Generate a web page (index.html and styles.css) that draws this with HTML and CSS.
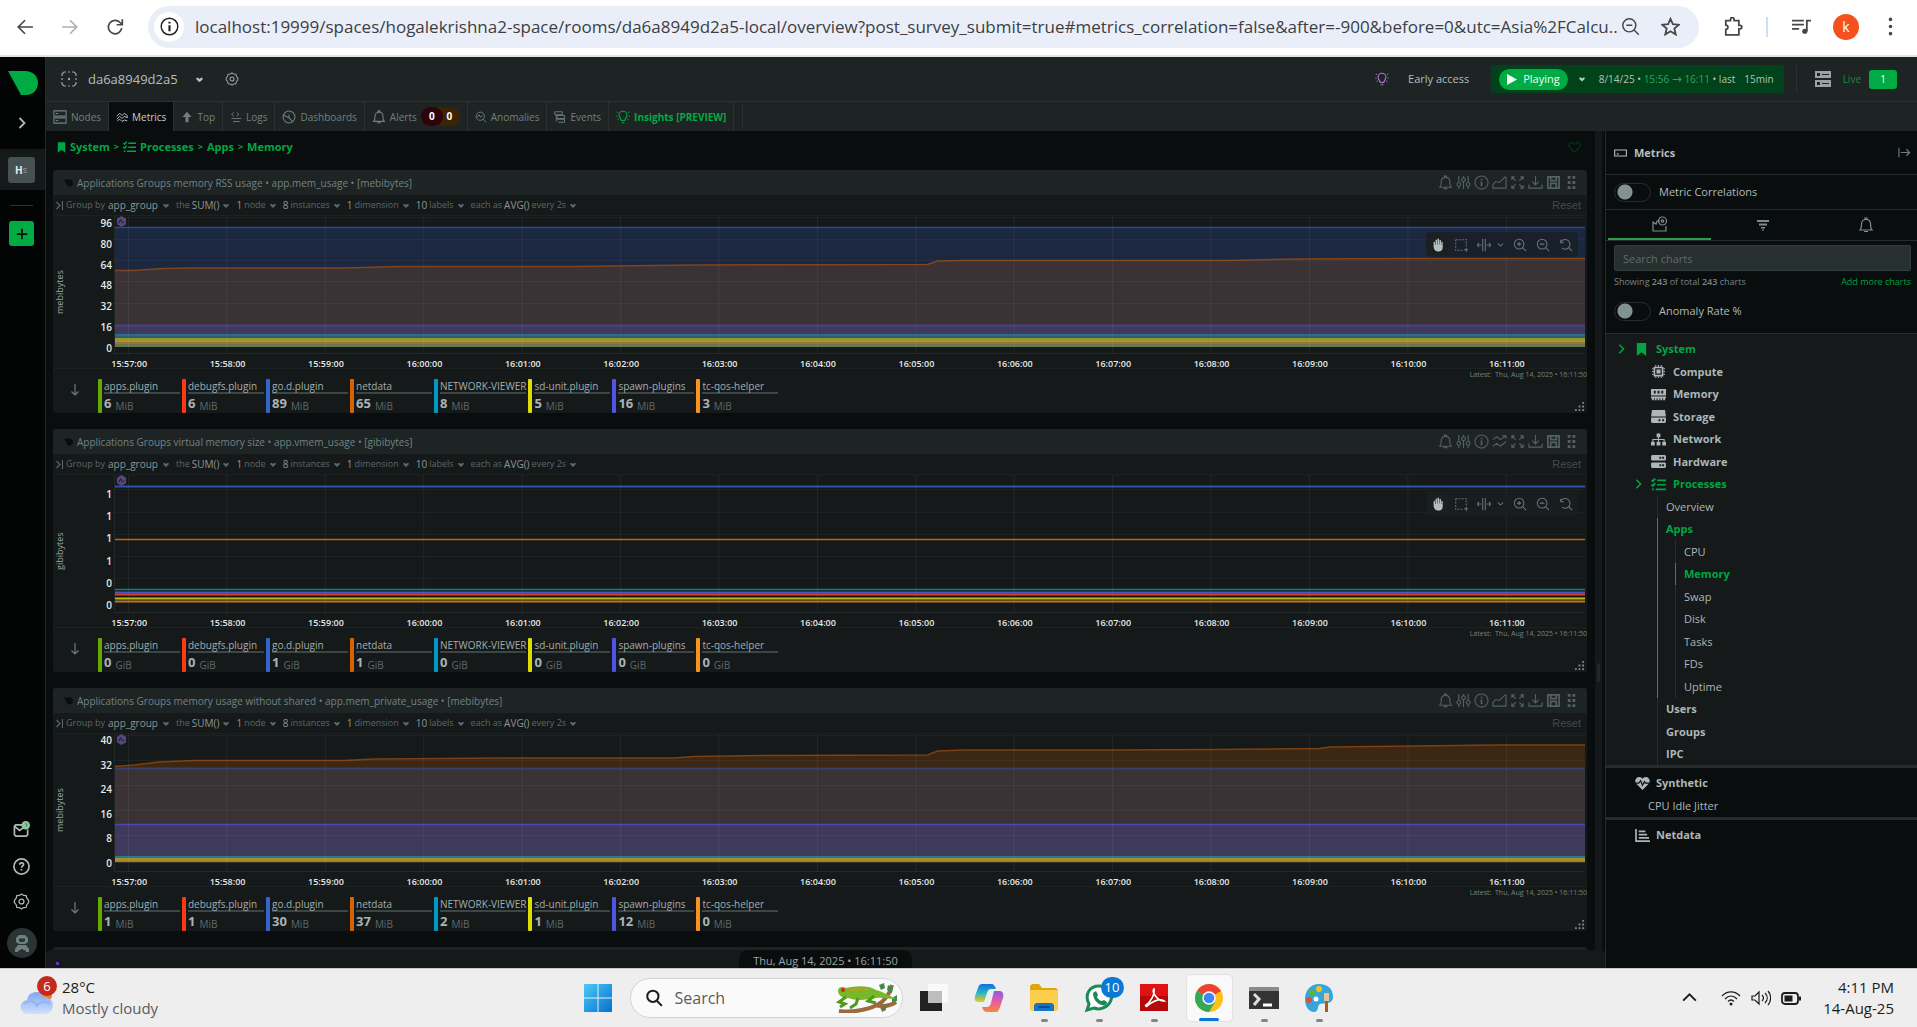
FILE: index.html
```html
<!DOCTYPE html>
<html lang="en">
<head>
<meta charset="utf-8">
<title>da6a8949d2a5 - Netdata</title>
<link rel="stylesheet" href="styles.css">
</head>
<body>
<svg class="defs" aria-hidden="true">
  <symbol id="logo" viewBox="0 0 30 24"><path d="M0 0h17c8 0 13 5 13 12s-5 12-12 12h-5z"/></symbol>
  <symbol id="chev" viewBox="0 0 8 8"><path d="M0.500 2h2L4 3.300 5.500 2h2v2L4 7.200 0.500 4z"/></symbol>
  <symbol id="thinchev" viewBox="0 0 8 8"><path d="M1 3l3 2.500L7 3" class="ln"/></symbol>
  <symbol id="right" viewBox="0 0 8 12"><path d="M1.500 1l5 5-5 5" class="ln th"/></symbol>
  <symbol id="bell" viewBox="0 0 16 16"><path d="M2 13c1-1 1.500-2 1.500-6 0-3 2-4.500 4.500-4.500S12.500 4 12.500 7c0 4 .5 5 1.500 6zM7 2.500V1h2v1.500M6 14.500h4" class="ln"/></symbol>
  <symbol id="gear" viewBox="0 0 16 16"><path d="M8 1l2 1.300 2.400.2.600 2.300L14.700 7v2L13 11l-.6 2.500-2.400.2L8 15l-2-1.300-2.400-.2L3 11 1.300 9V7L3 4.800l.6-2.300L6 2.300z" class="ln"/><circle cx="8" cy="8" r="2.300" class="ln"/></symbol>
  <symbol id="node" viewBox="0 0 16 16"><path d="M1 1h14v6H1zM1 9h14v6H1zM3 4h3M3 12h3" class="ln"/></symbol>
  <symbol id="waves" viewBox="0 0 16 16"><path d="M1 7l4-4 3 3 3-3 4 3v3l-4-2-3 3-3-3-4 4M2 13l3-2 3 3 3-2 4 1" class="ln"/></symbol>
  <symbol id="up" viewBox="0 0 16 16"><path d="M8 1l6 7h-4v7H6V8H2z"/></symbol>
  <symbol id="logs" viewBox="0 0 16 16"><path d="M5 2L2 4.500 5 7M9 2l3 2.500L9 7M2 10h13M4 14h9" class="ln"/></symbol>
  <symbol id="dash" viewBox="0 0 16 16"><circle cx="8" cy="8" r="6.800" class="ln"/><path d="M2 6l6 3V5M8 9l4 4" class="ln"/></symbol>
  <symbol id="anom" viewBox="0 0 16 16"><circle cx="7" cy="7" r="5.500" class="ln"/><path d="M3 8l2.500-3 2 3.500L10 6M11 11l4 4" class="ln"/></symbol>
  <symbol id="events" viewBox="0 0 16 16"><path d="M1 1h10v4H1zM4 6h10v4H4zM4 11h10v4H6M3 5v9" class="ln"/></symbol>
  <symbol id="bulb" viewBox="0 0 16 16"><path d="M6 12c0-2-2.500-3-2.500-6a4.500 4.500 0 0 1 9 0c0 3-2.500 4-2.500 6zM6.500 14.500h3M1 2l1 1M15 2l-1 1M0.500 7h1M14.500 7h1M2 11l1-1M14 11l-1-1" class="ln"/></symbol>
  <symbol id="bookmark" viewBox="0 0 12 14"><path d="M1 0h10v14l-5-4-5 4z"/></symbol>
  <symbol id="list" viewBox="0 0 16 14"><path d="M0.500 2l1.500 1.500L4.500.5M0.500 7L2 8.500 4.500 5.500M6.500 2.500H16M6.500 7.300H16M5 12.200h11M1 12.200h2" class="ln th"/></symbol>
  <symbol id="heart" viewBox="0 0 16 16"><path d="M8 14L2 8C0 5 2 2 4.500 2 6.500 2 8 4 8 4s1.500-2 3.500-2C14 2 16 5 14 8z" class="ln"/></symbol>
  <symbol id="sliders" viewBox="0 0 16 16"><path d="M3 1v7M3 12v3M8 1v2M8 7v8M13 1v7M13 12v3" class="ln"/><circle cx="3" cy="10" r="2" class="ln"/><circle cx="8" cy="5" r="2" class="ln"/><circle cx="13" cy="10" r="2" class="ln"/></symbol>
  <symbol id="info" viewBox="0 0 16 16"><circle cx="8" cy="8" r="7" class="ln"/><path d="M8 7v5M8 4v1.500" class="ln th"/></symbol>
  <symbol id="area" viewBox="0 0 16 16"><path d="M1 14V10l3-3 4 1 6-6 1 .5V14z" class="ln"/></symbol>
  <symbol id="lines" viewBox="0 0 16 16"><path d="M1 6l4-3 4 3 6-4M1 13l4-3 4 3 6-5M11 2h4v3" class="ln"/></symbol>
  <symbol id="full" viewBox="0 0 16 16"><path d="M2 5V2h3M2 2l4 4M11 2h3v3M14 2l-4 4M2 11v3h3M2 14l4-4M14 11v3h-3M14 14l-4-4" class="ln"/></symbol>
  <symbol id="down" viewBox="0 0 16 16"><path d="M8 1v9M4.500 7L8 10.500 11.500 7M1 10v4h14v-4" class="ln"/></symbol>
  <symbol id="save" viewBox="0 0 16 16"><path d="M2 2h12v12H2zM5 2v4h6V2M5 14V9h6v5" class="ln th"/></symbol>
  <symbol id="grip" viewBox="0 0 16 16"><path d="M4 1h3v3H4zM9 1h3v3H9zM4 6.500h3v3H4zM9 6.500h3v3H9zM4 12h3v3H4zM9 12h3v3H9z"/></symbol>
  <symbol id="arrow" viewBox="0 0 10 14"><path d="M5 1v11M1.500 8.500L5 12l3.500-3.500" class="ln"/></symbol>
  <symbol id="resize" viewBox="0 0 10 10"><path d="M8 0h2v2H8zM4 4h2v2H4zM8 4h2v2H8zM0 8h2v2H0zM4 8h2v2H4zM8 8h2v2H8z"/></symbol>
  <symbol id="hand" viewBox="0 0 16 16"><path d="M3 9.500V5c0-1 1.600-1 1.600 0v3h.6V2.600c0-1.200 1.700-1.200 1.700 0V7.500h.5V1.600c0-1.200 1.800-1.200 1.800 0v5.900h.5V2.800c0-1.200 1.700-1.200 1.700 0V8h.4V5c0-1 1.600-1 1.600 0v5.500c0 3.500-2 5-4.800 5S3 14 3 9.500z"/></symbol>
  <symbol id="select" viewBox="0 0 16 16"><path d="M2 2h12v8M2 2v12h8" class="ln dash"/><path d="M14 11v5M11.500 13.500h5" class="ln"/></symbol>
  <symbol id="pan" viewBox="0 0 16 16"><path d="M6.500 1v14M9.500 1v14M0 8h5M16 8h-5M2 5.500L.5 8 2 10.500M14 5.500L15.500 8 14 10.500" class="ln"/></symbol>
  <symbol id="zin" viewBox="0 0 16 16"><circle cx="7" cy="7" r="5.500" class="ln"/><path d="M11 11l4 4M4.500 7h5M7 4.500v5" class="ln"/></symbol>
  <symbol id="zout" viewBox="0 0 16 16"><circle cx="7" cy="7" r="5.500" class="ln"/><path d="M11 11l4 4M4.500 7h5" class="ln"/></symbol>
  <symbol id="zreset" viewBox="0 0 16 16"><path d="M2 2v3.500h3.500M2 5a5.500 5.500 0 1 1 1.500 6.500M11 11l4 4" class="ln"/></symbol>
  <symbol id="ai" viewBox="0 0 12 12"><path d="M6 0l5 3v6l-5 3-5-3V3z" fill="#54487c"/><path d="M3 8l2-4 2 3.500 2-1" fill="none" stroke="#1a1626"/></symbol>
  <symbol id="chip" viewBox="0 0 16 16"><path d="M3 3h10v10H3z" fill="none" stroke="currentColor" stroke-width="2"/><path d="M5.500 5.500h5v5h-5zM4 0h1.300v2H4zM7.300 0h1.300v2H7.300zM10.700 0H12v2h-1.300zM4 14h1.300v2H4zM7.300 14h1.300v2H7.300zM10.700 14H12v2h-1.300zM0 4h2v1.300H0zM0 7.300h2v1.300H0zM0 10.700h2V12H0zM14 4h2v1.300h-2zM14 7.300h2v1.300h-2zM14 10.700h2V12h-2z"/></symbol>
  <symbol id="ram" viewBox="0 0 16 12"><path fill-rule="evenodd" d="M0 0h16v7H0zM3 2v3h2V2zM7 2v3h2V2zM11 2v3h2V2zM0 8h16v2h-1v2h-2v-2h-1v2h-2v-2H9v2H7v-2H6v2H4v-2H3v2H1v-2H0z"/></symbol>
  <symbol id="disk" viewBox="0 0 16 14"><path d="M1 0h14l1 7H0z"/><path fill-rule="evenodd" d="M0 8h16v5l-1 1H1l-1-1zM8 10v2h2v-2zM12 10v2h2v-2z"/></symbol>
  <symbol id="net" viewBox="0 0 16 13"><path d="M6 0h4v4H6zM0 9h4v4H0zM6 9h4v4H6zM12 9h4v4h-4z"/><path d="M8 4v5M2 9V6.500h12V9" class="ln"/></symbol>
  <symbol id="server" viewBox="0 0 16 14"><path fill-rule="evenodd" d="M1 0h14l1 1v4l-1 1H1L0 5V1zM9 2v2h2V2zM12 2v2h2V2zM1 8h14l1 1v4l-1 1H1l-1-1V9zM9 10v2h2v-2zM12 10v2h2v-2z"/></symbol>
  <symbol id="pulse" viewBox="0 0 16 14"><path d="M8 14L1 7C-1 4 1 0 4.500 0 7 0 8 2 8 2s1-2 3.500-2C15 0 17 4 15 7z"/><path d="M0 6.500h4L6 4l2 5 2-4 1 1.500h5" fill="none" stroke="#0a0d0d" stroke-width="1.300"/></symbol>
  <symbol id="bars" viewBox="0 0 16 14"><path d="M1 0v13h15M4 2.500h7M4 6h9M4 9.500h11" class="ln th"/></symbol>
</svg>

<header class="browser">
  <button class="nav" aria-label="Back"><svg viewBox="0 0 16 16"><path d="M15 8H2M8 2L2 8l6 6" class="ln"/></svg></button>
  <button class="nav off" aria-label="Forward"><svg viewBox="0 0 16 16"><path d="M1 8h13M8 2l6 6-6 6" class="ln"/></svg></button>
  <button class="nav" aria-label="Reload"><svg viewBox="0 0 16 16"><path d="M14 9a6 6 0 1 1-1.500-5L14 5.500M14.500 1v5h-5" class="ln"/></svg></button>
  <div class="omnibox">
    <button class="site" aria-label="Site information"><svg viewBox="0 0 16 16"><use href="#info"/></svg></button>
    <input class="url" aria-label="Address" value="localhost:19999/spaces/hogalekrishna2-space/rooms/da6a8949d2a5-local/overview?post_survey_submit=true#metrics_correlation=false&amp;after=-900&amp;before=0&amp;utc=Asia%2FCalcu...">
    <button class="bicon" aria-label="Zoom"><svg viewBox="0 0 16 16"><use href="#zout"/></svg></button>
    <button class="bicon" aria-label="Bookmark"><svg viewBox="0 0 16 16"><path d="M8 1.500l2 4.500 5 .5-3.800 3.200 1.200 5L8 12l-4.400 2.700 1.200-5L1 6.500 6 6z" class="ln"/></svg></button>
  </div>
  <button class="bicon ext" aria-label="Extensions"><svg viewBox="0 0 16 16"><path d="M1.500 3h4V2a1.500 1.500 0 0 1 3 0v1h4v4h1a1.500 1.500 0 0 1 0 3h-1v5h-11v-4.500a1.800 1.800 0 0 0 0-3.600z" class="ln"/></svg></button>
  <span class="bsep"></span>
  <button class="bicon media" aria-label="Media"><svg viewBox="0 0 16 16"><path d="M0 3h10M0 6.500h10M0 10h6M12.500 12V3H16" class="ln"/><circle cx="10.800" cy="12" r="2.200"/></svg></button>
  <button class="account" aria-label="Account">k</button>
  <button class="bicon" aria-label="Menu"><svg viewBox="0 0 16 16"><circle cx="8" cy="2" r="1.500"/><circle cx="8" cy="8" r="1.500"/><circle cx="8" cy="14" r="1.500"/></svg></button>
</header>

<div class="app">
  <aside class="rail">
    <svg class="rail-logo"><use href="#logo"/></svg>
    <button class="rail-btn open" aria-label="Expand"><svg viewBox="0 0 8 12"><use href="#right"/></svg></button>
    <div class="space"><button>H<small>s</small></button></div>
    <hr>
    <button class="add" aria-label="Add space"><svg viewBox="0 0 16 16"><path d="M8 2v12M2 8h12" class="ln"/></svg></button>
    <div class="rail-foot">
      <button class="rail-btn mail" aria-label="Invite"><svg viewBox="0 0 18 18"><path d="M11 4H3L1.500 5.500v9L3 16h11l1.500-1.500V9M2 6l5 4 4-3" class="ln th"/><circle cx="13.500" cy="4.500" r="4.500" fill="#8fc79c"/><path d="M13 3h1.500v3" stroke="#3e7a4c" fill="none"/></svg></button>
      <button class="rail-btn" aria-label="Help"><svg viewBox="0 0 18 18"><circle cx="9" cy="9" r="8" class="ln th"/><path d="M7 7.200C7 4.500 11.200 4.500 11.200 7c0 1.500-2.200 1.500-2.200 3.300M9 11.700v1.600" class="ln th"/></svg></button>
      <button class="rail-btn" aria-label="Settings"><svg viewBox="0 0 16 16" class="thick"><use href="#gear"/></svg></button>
      <button class="user" aria-label="User"><svg viewBox="0 0 16 18"><path d="M5 1h6l3 3v4l-3 2H5L2 8V4z"/><path d="M4 11h8l3 4v3h-3l-1-2H5l-1 2H1v-3z"/><path d="M5 4.500h6v2l-1 1.500H6L5 6.500z" fill="#2b3434"/><path d="M7 15h2v2H7z" fill="#2b3434"/></svg></button>
    </div>
  </aside>

  <div class="main">
    <div class="topbar">
      <svg class="ic16 room" viewBox="0 0 16 16"><path d="M5 1H3L1 3v2M11 1h2l2 2v2M5 15H3l-2-2v-2M11 15h2l2-2v-2M1 7v2M15 7v2M7 1h2M7 15h2" class="ln"/><circle cx="8" cy="8" r="1.200"/></svg>
      <button class="node-name">da6a8949d2a5 <svg class="chev"><use href="#chev"/></svg></button>
      <button class="node-gear" aria-label="Room settings"><svg class="ic14 thick"><use href="#gear"/></svg></button>
      <div class="top-right">
        <svg class="ic14 early"><use href="#bulb"/></svg>
        <a href="#early" class="early-link">Early access</a>
        <div class="play">
          <button class="playing"><svg viewBox="0 0 12 12"><path d="M0 0l11 6-11 6z"/></svg>Playing</button>
          <svg class="chev light"><use href="#chev"/></svg>
          <span class="range">8/14/25 • <b>15:56 <i>→</i> 16:11</b> • last</span><span class="range">15min</span>
        </div>
        <span class="vsep"></span>
        <svg class="ic16 live-ic" viewBox="0 0 16 16"><path fill-rule="evenodd" d="M0 0h16v7H0zM2 2v3h3V2zM7 3v1h7V3zM0 9h16v7H0zM2 11v3h3v-3zM7 12v1h7v-1z"/></svg>
        <span class="live">Live</span><span class="live-n">1</span>
      </div>
    </div>

    <nav class="tabs">
      <a href="#nodes"><svg class="ic14"><use href="#node"/></svg>Nodes</a>
      <a href="#metrics" class="on"><svg class="ic12"><use href="#waves"/></svg>Metrics</a>
      <a href="#top"><svg class="ic12"><use href="#up"/></svg>Top</a>
      <a href="#logs"><svg class="ic12"><use href="#logs"/></svg>Logs</a>
      <a href="#dashboards"><svg class="ic14"><use href="#dash"/></svg>Dashboards</a>
      <a href="#alerts"><svg class="ic14"><use href="#bell"/></svg>Alerts<span class="counts"><i>0</i><em>0</em></span></a>
      <a href="#anomalies"><svg class="ic12"><use href="#anom"/></svg>Anomalies</a>
      <a href="#events"><svg class="ic12"><use href="#events"/></svg>Events</a>
      <a href="#insights" class="insights"><svg class="ic14"><use href="#bulb"/></svg>Insights [PREVIEW]</a>
      <span class="tabs-end"></span>
    </nav>

    <div class="work">
      <div class="center">
        <div class="scroll">
          <div class="feed">
            <div class="crumbs">
              <svg class="bm"><use href="#bookmark"/></svg><a href="#system">System</a><span>&gt;</span>
              <svg class="ls"><use href="#list"/></svg><a href="#processes">Processes</a><span>&gt;</span>
              <a href="#apps">Apps</a><span>&gt;</span><a href="#memory">Memory</a>
              <svg class="fav"><use href="#heart"/></svg>
            </div>
            <div id="charts" class="charts"></div>
          </div>
          <div class="track"><span></span></div>
        </div>
        <footer class="status"><span class="dot"></span><time>Thu, Aug 14, 2025 • 16:11:50</time></footer>
      </div>

      <aside class="panel">
        <h2><svg viewBox="0 0 14 8"><path d="M.7.700h12.600v6.600H.7zM3 5h2" class="ln"/></svg>Metrics
          <button aria-label="Collapse"><svg viewBox="0 0 14 10"><path d="M1 0v10M3 5h9.500M9 1.500L12.500 5 9 8.500" class="ln"/></svg></button></h2>
        <label class="switch first"><input type="checkbox">Metric Correlations</label>
        <div class="ptabs">
          <button class="on" aria-label="Charts"><svg viewBox="0 0 16 16"><path d="M8 5H5L4 8 1 6v9h13v-5M1 11" class="ln"/><circle cx="10.500" cy="5" r="4" class="ln"/><circle cx="10.500" cy="5" r="1.200" class="ln"/></svg></button>
          <button aria-label="Filters"><svg viewBox="0 0 16 16"><path d="M2 3h12v2H2zM4 6.500h8v2H4zM6 10h4v1.500H6zM7 12.500h2v1H7z"/></svg></button>
          <button aria-label="Alerts"><svg viewBox="0 0 16 16"><use href="#bell"/></svg></button>
        </div>
        <input class="search" aria-label="Search charts" placeholder="Search charts">
        <p class="showing"><span>Showing <b>243</b> of total <b>243</b> charts</span><a href="#add">Add more charts</a></p>
        <label class="switch last"><input type="checkbox">Anomaly Rate %</label>
        <nav class="tree">
          <a href="#t1" class="l0 hot"><svg class="open"><use href="#right"/></svg><svg><use href="#bookmark"/></svg>System</a>
          <a href="#t2" class="l1"><svg><use href="#chip"/></svg>Compute</a>
          <a href="#t3" class="l1"><svg><use href="#ram"/></svg>Memory</a>
          <a href="#t4" class="l1"><svg><use href="#disk"/></svg>Storage</a>
          <a href="#t5" class="l1"><svg><use href="#net"/></svg>Network</a>
          <a href="#t6" class="l1"><svg><use href="#server"/></svg>Hardware</a>
          <a href="#t7" class="l1p hot"><svg class="open"><use href="#right"/></svg><svg><use href="#list"/></svg>Processes</a>
          <a href="#t8" class="l2 thin"><i></i>Overview</a>
          <a href="#t9" class="l2 hot"><i class="g"></i>Apps</a>
          <a href="#t10" class="l3 thin"><i class="g"></i><i></i>CPU</a>
          <a href="#t11" class="l3 hot"><i class="g"></i><i class="g"></i>Memory</a>
          <a href="#t12" class="l3 thin"><i class="g"></i><i></i>Swap</a>
          <a href="#t13" class="l3 thin"><i class="g"></i><i></i>Disk</a>
          <a href="#t14" class="l3 thin"><i class="g"></i><i></i>Tasks</a>
          <a href="#t15" class="l3 thin"><i class="g"></i><i></i>FDs</a>
          <a href="#t16" class="l3 thin"><i class="g"></i><i></i>Uptime</a>
          <a href="#t17" class="l2"><i></i>Users</a>
          <a href="#t18" class="l2"><i></i>Groups</a>
          <a href="#t19" class="l2"><i></i>IPC</a>
        </nav>
        <nav class="tree dark">
          <a href="#t20" class="l0s"><svg><use href="#pulse"/></svg>Synthetic</a>
          <a href="#t21" class="l0t thin">CPU Idle Jitter</a>
        </nav>
        <nav class="tree dark">
          <a href="#t22" class="l0s"><svg><use href="#bars"/></svg>Netdata</a>
        </nav>
      </aside>
    </div>
  </div>
</div>

<footer class="taskbar">
  <button class="weather">
    <svg viewBox="0 0 36 40"><defs><linearGradient id="cl" x1="0" y1="0" x2="0" y2="1"><stop offset="0" stop-color="#7fa8ee"/><stop offset="1" stop-color="#cfe0fb"/></linearGradient></defs><circle cx="25" cy="17" r="7" fill="#f57c1f"/><path d="M8 36a7 7 0 0 1-1-14 9 9 0 0 1 17-3 8 8 0 0 1 1 17z" fill="url(#cl)"/><path d="M4 26c6-5 12-2 13 2 3-5 8-5 13-2" fill="none" stroke="#8fb2f0" stroke-width="1.500"/></svg>
    <span class="wbadge">6</span>
    <span class="wtext">28°C<small>Mostly cloudy</small></span>
  </button>
  <div class="dock">
    <button class="tile" aria-label="Start"><svg viewBox="0 0 30 30"><defs><linearGradient id="wn" x1="0" y1="0" x2="1" y2="1"><stop offset="0" stop-color="#4cc9f5"/><stop offset="1" stop-color="#0670cf"/></linearGradient></defs><path d="M1 1h13.500v13.500H1zM15.500 1H29v13.500H15.500zM1 15.500h13.500V29H1zM15.500 15.500H29V29H15.500z" fill="url(#wn)"/></svg></button>
    <label class="find"><svg viewBox="0 0 16 16"><circle cx="7" cy="6.500" r="5" class="ln th"/><path d="M10.500 10.500L15 15" class="ln th"/></svg>
      <input placeholder="Search" aria-label="Search Windows">
      <svg class="frog" viewBox="0 0 62 30"><path d="M3 28c14 2 30-2 38-6S54 10 56 2M38 22c8 2 16 1 22-3M44 20l4 8" fill="none" stroke="#9a6a3c" stroke-width="4"/><path d="M52 2l5 3-1 5-5-3zM43 2l5-2 1 5-4 2zM56 15l5-3v6l-5 1zM45 24l6-1-2 5z" fill="#3f8a4a"/><path d="M2 8c0-4 4-5 8-3 10-2 22-3 30 2 8 2 14 6 20 9-8 0-14-2-20-1-10 2-20 3-28 0-5 1-10-3-10-7z" fill="#76b82a"/><path d="M10 14l-7 5 6 2-5 3M22 15l-2 6-6 4M38 13l-6 5 8 2" fill="none" stroke="#4f9a1c" stroke-width="3"/><circle cx="7" cy="7" r="2" fill="#d9241c"/><path d="M14 7l18-1" stroke="#ef8a1c" stroke-width="2" stroke-dasharray="3 2"/></svg></label>
    <button class="tile" aria-label="Task view"><svg viewBox="0 0 30 30"><path d="M1 8h22v20H1z" fill="#222"/><path d="M9 1h20v19H9z" fill="#fafafa"/><path d="M9 8h14v12H9z" fill="#bdbdbd"/></svg></button>
    <button class="tile" aria-label="Copilot"><svg viewBox="0 0 30 30"><defs><linearGradient id="c1" x1="0" y1="0" x2="0" y2="1"><stop offset="0" stop-color="#0d6fe0"/><stop offset=".5" stop-color="#28b8c9"/><stop offset="1" stop-color="#f2c91a"/></linearGradient><linearGradient id="c2" x1="0" y1="0" x2="0" y2="1"><stop offset="0" stop-color="#8a5be8"/><stop offset=".5" stop-color="#e65ba0"/><stop offset="1" stop-color="#f68a3c"/></linearGradient></defs><path d="M8 1h9c3 0 4 2 5 5h-5c-2 0-3 1-4 4l-3 9H4c-3 0-4-3-3-6l3-8c1-3 2-4 4-4z" fill="url(#c1)"/><path d="M22 29h-9c-3 0-4-2-5-5h5c2 0 3-1 4-4l3-12h6c3 0 4 4 3 7l-3 9c-1 3-2 5-4 5z" fill="url(#c2)"/></svg></button>
    <button class="tile run" aria-label="File Explorer"><svg viewBox="0 0 30 30"><path d="M1 3l2-2h7l3 4h14l2 2v20H1z" fill="#e0a512"/><path d="M1 7h28v19l-2 2H3l-2-2z" fill="#fdce4b"/><path d="M5 28v-6l2-2h16l2 2v6z" fill="#1573c9"/><path d="M9 24h12" stroke="#0b4f96" stroke-width="2"/></svg></button>
    <button class="tile run" aria-label="WhatsApp"><svg viewBox="0 0 30 30"><path d="M3 27l2-6C0 11 6 3 15 3s14 8 12 14-10 11-17 8z" fill="#fff" stroke="#1a8a57" stroke-width="3"/><path d="M9 10l3-2 2 4-1 2c1 2 3 4 5 4l2-1 3 2c0 3-3 4-5 3-5-1-9-6-9-12z" fill="#1a8a57"/></svg><span class="tbadge">10</span></button>
    <button class="tile run" aria-label="Acrobat"><svg viewBox="0 0 30 30"><path d="M1 1h28v27H1z" fill="#b50a0a"/><path d="M1 1h28v12H1z" fill="#e01212"/><path d="M6 23c6-4 10-12 9-17-3 2 3 12 10 12-4-3-12 0-18 6" fill="none" stroke="#fff" stroke-width="1.600"/></svg></button>
    <button class="tile run active" aria-label="Chrome"><svg viewBox="0 0 30 30"><circle cx="15" cy="15" r="14" fill="#fbc116"/><path d="M15 15L2.900 8a14 14 0 0 1 24.200 0z" fill="#ea4335"/><path d="M15 15L2.900 8A14 14 0 0 0 15 29l6-10z" fill="#34a853"/><circle cx="15" cy="15" r="6.700" fill="#fff"/><circle cx="15" cy="15" r="5.300" fill="#4285f4"/></svg></button>
    <button class="tile run" aria-label="Terminal"><svg viewBox="0 0 30 30"><path d="M0 4h30v22H0z" fill="#333"/><path d="M0 4h30v4H0z" fill="#8a8a8a"/><path d="M5 11l5 5-5 6" fill="none" stroke="#ddd" stroke-width="3"/><path d="M14 22h9" stroke="#fff" stroke-width="3"/></svg></button>
    <button class="tile run" aria-label="Paint"><svg viewBox="0 0 30 30"><path d="M15 1C6 1 1 8 1 16s4 13 9 13 3-7 6-8 13 1 13-7S24 1 15 1z" fill="#35a6dc"/><circle cx="8" cy="10" r="3" fill="#5ab82e"/><circle cx="15" cy="6" r="3" fill="#f5c21a"/><circle cx="5" cy="17" r="3" fill="#e04f3a"/><circle cx="12" cy="16" r="2.500" fill="#fff"/><path d="M20 10h5v8h-5z" fill="#e8c49a"/><path d="M21 18h3v11h-3z" fill="#a85f1c"/></svg></button>
  </div>
  <div class="tray">
    <svg class="tray-up" viewBox="0 0 16 16"><path d="M2 11l6-6 6 6" class="ln th"/></svg>
    <svg viewBox="0 0 20 16"><path d="M1 6c5-5.500 13-5.500 18 0M4 9c3.500-4 8.500-4 12 0M7 11.500c2-2 4-2 6 0" class="ln"/><circle cx="10" cy="14" r="1.500"/></svg>
    <svg viewBox="0 0 20 16"><path d="M1 6h3l4-4v12l-4-4H1zM11 5c2 2 2 4 0 6M14 3c3 3 3 7 0 10M17 1c3.500 4 3.500 10 0 14" class="ln"/></svg>
    <svg viewBox="0 0 20 16"><rect x="1" y="3" width="16" height="11" rx="3" class="ln th"/><path d="M3.500 5.500h8v6h-8zM18 6.500h2v4h-2z"/></svg>
    <time>4:11 PM<br>14-Aug-25</time>
  </div>
</footer>
<script src="app.js"></script>
</body>
</html>
```
FILE: styles.css
```css
* { box-sizing: border-box; }
body { margin: 0; height: 100vh; display: flex; flex-direction: column; overflow: hidden; background: #0a0d0d; color: #aab4b4; font: 10px/14px "Open Sans", sans-serif; }
button { border: 0; padding: 0; background: none; color: inherit; font: inherit; display: flex; align-items: center; justify-content: center; }
a { color: inherit; text-decoration: none; }
svg { fill: currentColor; flex: none; display: block; }
input { font: inherit; border: 0; min-width: 0; }
.defs { display: none; }
.ln { fill: none; stroke: currentColor; stroke-width: 1.200; }
.th { stroke-width: 1.800; }
.thick .ln { stroke-width: 1.600; }
.dash { stroke-dasharray: 2 1.500; }
.ic12 { width: 12px; height: 12px; }
.ic14 { width: 14px; height: 14px; }
.ic16 { width: 16px; height: 16px; }
.chev { width: 8px; height: 8px; }

/* browser toolbar */
.browser { flex: none; height: 57px; display: flex; align-items: center; padding: 0 18px 2px 16px; background: #fff; border-bottom: 2px solid #dfe3e1; color: #474747; }
.browser .nav { width: 18px; margin-right: 27px; }
.browser .nav svg { width: 18px; height: 18px; }
.browser .nav .ln, .bicon .ln { stroke-width: 1.500; }
.browser .off { color: #b0b0b0; }
.browser .nav:nth-child(3) { margin-right: 24px; }
.omnibox { flex: 1; display: flex; align-items: center; height: 42px; border-radius: 21px; background: #e9eef8; padding: 0 18px 0 6px; }
.site { width: 30px; height: 30px; border-radius: 15px; background: #fff; color: #1f1f1f; }
.site svg { width: 19px; height: 19px; }
.url { flex: 1; height: 30px; margin: 0 0 0 11px; padding: 0; background: none; color: #3c4043; font: 17px/30px "Open Sans", sans-serif; outline: 0; }
.bicon { width: 22px; color: #474747; }
.bicon svg { width: 19px; height: 19px; }
.omnibox .bicon + .bicon { margin-left: 18px; }
.ext { margin-left: 23px; }
.bsep { width: 2px; height: 20px; margin: 0 22px; background: #cfdcfa; }
.media { margin-right: 21px; }
.account { width: 26px; height: 26px; margin-right: 22px; border-radius: 13px; background: #f4511e; color: #fff; font-size: 14px; }
.browser > .bicon:last-child { width: 18px; }

/* app frame */
.app { flex: 1; min-height: 0; display: flex; }
.rail { width: 46px; flex: none; display: flex; flex-direction: column; align-items: center; padding-right: 2px; background: #030404; border-right: 1px solid #222929; }
.rail-logo { width: 30px; height: 24px; margin: 14px 0 0 2px; color: #00ab44; }
.rail-btn svg { width: 17px; height: 17px; color: #aeb9b9; }
.rail .open { height: 54px; padding-top: 2px; color: #c8d0d0; }
.rail .open svg { width: 8px; height: 14px; }
.space { align-self: stretch; height: 41px; margin-right: -2px; padding-right: 3px; display: flex; align-items: center; justify-content: center; background: #14191a; }
.space button { width: 27px; height: 26px; border-radius: 3px; background: #475152; color: #e6ecec; font-weight: 700; }
.space small { font-size: 9px; font-weight: 400; color: #9aa5a5; }
.rail hr { width: 23px; height: 1px; margin: 15px 0; border: 0; background: #2b3232; }
.add { width: 25px; height: 25px; border-radius: 3px; background: #00ab44; color: #04150a; }
.add svg { width: 14px; height: 14px; }
.add .ln { stroke-width: 2; }
.rail-foot { margin-top: auto; display: flex; flex-direction: column; align-items: center; gap: 18px; padding-bottom: 10px; }
.mail { margin-bottom: 2px; }
.user { width: 30px; height: 30px; border-radius: 15px; background: #2b3434; color: #6f8080; }
.user svg { width: 16px; height: 18px; }

.main { flex: 1; min-width: 0; display: flex; flex-direction: column; }
.topbar { flex: none; height: 45px; display: flex; align-items: center; padding: 0 20px 0 15px; background: #1e2424; border-bottom: 1px solid #2a3131; }
.room { color: #98a3a3; }
.node-name { margin-left: 11px; gap: 18px; font-size: 13px; color: #b5bfbf; }
.node-name .chev { width: 7px; height: 7px; }
.node-gear { margin-left: 22px; color: #98a3a3; }
.top-right { margin-left: auto; display: flex; align-items: center; font-size: 11px; color: #b2bcbc; }
.early { color: #b57ad0; margin-right: 19px; }
.play { display: flex; align-items: center; height: 28px; margin-left: 22px; padding: 0 10px 0 8px; border-radius: 3px; background: #00421a; }
.playing { height: 21px; padding: 0 8px; gap: 5px; border-radius: 11px; background: #00ab44; color: #f2fff6; }
.playing svg { width: 11px; height: 11px; }
.light { width: 6px; height: 6px; color: #b7cdbf; margin: 0 14px 0 11px; }
.range { font-size: 10px; color: #b4c4ba; white-space: pre; }
.range + .range { margin-left: 9px; }
.range b { font-weight: 400; color: #2fa559; }
.range i { font-family: "DejaVu Sans", sans-serif; font-style: normal; font-size: 12px; line-height: 12px; }
.vsep { width: 1px; height: 28px; margin: 0 18px 0 12px; background: #2a3131; }
.live-ic { color: #98a3a3; }
.live { margin: 0 8px 0 12px; font-size: 10px; color: #128a41; }
.live-n { width: 28px; height: 19px; border-radius: 3px; background: #00ab44; color: #eafff1; font-size: 10px; line-height: 19px; text-align: center; }

.tabs { flex: none; display: flex; height: 29px; background: #1e2424; color: #6f8080; }
.tabs a { display: flex; align-items: center; gap: 4px; padding: 0 7px; border-right: 1px solid #2a3131; }
.tabs .on { background: #0a0d0d; color: #c5cdcd; }
.tabs .insights { color: #00ab44; font-weight: 700; }
.tabs .counts { display: flex; height: 19px; border-radius: 10px; background: #3d2400; color: #fff; line-height: 19px; font-weight: 700; text-align: center; }
.counts i { width: 22px; font-style: normal; border-radius: 10px; background: #2e0309; }
.counts em { width: 17px; font-style: normal; padding-right: 4px; }
.tabs-end { width: 1px; height: 23px; margin: 3px 0 0 8px; background: #2a3131; }

.work { flex: 1; min-height: 0; display: flex; }
.center { flex: 1; min-width: 0; display: flex; flex-direction: column; }
.scroll { flex: 1; min-height: 0; display: flex; overflow: hidden; }
.feed { flex: 1; min-width: 0; padding: 0 8px 0 7px; }
.track { width: 10px; background: #14181a; padding: 532px 2px 0 2px; border-right: 3px solid #0a0d0d; }
.track span { display: block; height: 19px; border-radius: 3px; background: #20282a; }
.crumbs { display: flex; align-items: center; height: 38px; padding: 0 6px 6px 4px; gap: 4px; color: #00a644; font: 700 11px/14px "Open Sans", sans-serif; }
.crumbs span { font-size: 9px; }
.crumbs .bm { width: 9px; height: 13px; }
.crumbs .ls { width: 13px; height: 12px; }
.crumbs .fav { width: 13px; height: 13px; margin-left: auto; color: #02481e; }
.charts { display: flex; flex-direction: column; gap: 16px; margin-top: 1px; }

/* chart card */
.card { flex: none; background: #151919; border-radius: 3px; }
.card header { display: flex; align-items: center; height: 25px; padding: 0 8px 0 11px; background: #1e2424; color: #718383; border-radius: 3px 3px 0 0; }
.card h3 { flex: 1; margin: 0; font: inherit; }
.card header .mark { width: 9px; height: 8px; margin-right: 4px; color: #0a0d0d; }
.tools { display: flex; gap: 3px; color: #536161; }
.tools svg { width: 15px; height: 15px; }
.query { display: flex; align-items: center; height: 21px; padding: 0 6px 0 3px; color: #5a6868; font-size: 9px; border-bottom: 1px solid #1c2222; }
.query button { gap: 2px; margin-right: 7px; }
.query .chev { width: 6px; height: 7px; margin-left: 2px; }
.query button:first-of-type { gap: 3px; }
.query b { font-size: 10px; font-weight: 500; color: #8b9696; }
.query .collapse { margin: 0 3px 0 0; width: 7px; }
.query .reset { margin: 0 0 0 auto; color: #424b4b; font: 11px/14px "Liberation Sans", sans-serif; }
.plotrow { display: flex; height: 138px; padding-right: 2px; }
.unit { writing-mode: vertical-rl; transform: rotate(180deg); width: 14px; margin-top: 14px; text-align: center; font-size: 9px; color: #98a4a4; }
.yaxis { width: 47px; padding: 0 2px 0 0; display: flex; flex-direction: column; justify-content: space-between; text-align: right; color: #e6eaea; font: 600 10px/12px "Open Sans", sans-serif; }
.plot { position: relative; flex: 1; min-width: 0; }
.plot .data { width: 100%; height: 138px; }
.plot .ai { position: absolute; left: 2px; top: 0; width: 11px; height: 11px; }
.ptools { position: absolute; top: 16px; right: 7px; height: 25px; display: flex; align-items: center; gap: 9px; padding: 0 5px 0 2px; border-radius: 4px; background: rgba(25, 31, 33, .75); color: #66757a; }
.ptools svg { width: 14px; height: 14px; }
.ptools .chev { width: 7px; height: 7px; margin-left: -3px; }
.ptools .grab { width: 20px; height: 19px; border-radius: 3px; background: #1a2020; color: #b5bfbf; margin-right: -3px; }
.xaxis { display: grid; grid-template-columns: repeat(15, 1fr); height: 15px; padding: 3px 31px 0 27px; border-bottom: 1px solid #1c2222; text-align: center; color: #e6eaea; font: 600 9px/13px "Open Sans", sans-serif; }
.legend { position: relative; display: flex; height: 44px; padding: 10px 0 0 17px; }
.legend .down { width: 10px; height: 14px; margin: 4px 18px 0 0; color: #6d7b7b; }
.item { display: flex; height: 34px; margin-right: 2px; }
.item > i { width: 4px; border-radius: 1px; margin-right: 2px; }
.item div { min-width: 76px; }
.item span { display: block; line-height: 14px; border-bottom: 2px solid #3b4646; color: #a2aeae; height: 15px; }
.item strong { font-size: 13px; line-height: 18px; color: #a9b4b4; }
.item small { font-size: 10px; margin-left: 4px; color: #5c6b6b; position: relative; top: 2px; }
.latest { position: absolute; right: 0; top: 0; font-size: 7px; line-height: 11px; color: #738383; white-space: pre; }
.grip { position: absolute; right: 3px; bottom: 2px; width: 9px; height: 9px; color: #7d8989; }

.status { flex: none; height: 18px; display: flex; justify-content: center; position: relative; background: #151919; border-radius: 4px 4px 0 0; }
.status time { padding: 0 14px; border-radius: 9px 9px 0 0; background: #0a0d0d; font-size: 11px; line-height: 21px; color: #9aa6a6; }
.dot { position: absolute; left: 10px; bottom: 3px; width: 3px; height: 3px; background: #6534b8; }

/* right panel */
.panel { width: 312px; flex: none; border-left: 1px solid #222929; font-size: 11px; }
.panel h2 { display: flex; align-items: center; gap: 7px; height: 44px; margin: 0; padding: 0 6px 0 8px; border-bottom: 1px solid #262d2d; color: #b5bfbf; font: 700 11px/14px "Open Sans", sans-serif; }
.panel h2 svg { width: 13px; height: 8px; }
.panel h2 button { margin-left: auto; color: #6f8080; }
.panel h2 button svg { height: 11px; }
.switch { display: flex; align-items: center; gap: 8px; height: 35px; padding-left: 8px; color: #b0baba; }
.switch input { appearance: none; width: 37px; height: 19px; margin: 0; border: 1px solid #262d2d; border-radius: 10px; background: radial-gradient(circle at 10px 8px, #829191 7px, transparent 8px); }
.first, .ptabs, .last { border-bottom: 1px solid #262d2d; }
.ptabs { display: grid; grid-template-columns: repeat(3, 1fr); height: 31px; padding-left: 2px; color: #7d8d8d; }
.ptabs .on { border-bottom: 2px solid #2f9a52; }
.ptabs svg { width: 16px; height: 16px; }
.search { display: block; width: 297px; height: 26px; margin: 4px 6px 0 8px; padding: 0 8px; border: 1px solid #343d3d; border-radius: 2px; background: #282f2f; color: #b0baba; }
.search::placeholder { color: #5f6c6c; }
.showing { display: flex; justify-content: space-between; margin: 4px 6px 0 8px; font-size: 9px; color: #788686; }
.showing b { font-weight: 600; }
.showing a { color: #00a040; }
.last { height: 45px; }
.tree { padding-top: 4px; background: #151919; border-bottom: 3px solid #252c2c; }
.tree.dark { background: none; padding-top: 4px; }
.tree.dark:last-child { border: 0; }
.tree a { display: flex; align-items: center; height: 22px; color: #adb7b7; font-weight: 700; }
.tree a:nth-child(even) { height: 23px; }
.tree svg { width: 15px; height: 13px; margin-right: 7px; }
.tree .open { width: 7px; height: 10px; margin-right: 9px; }
.tree .hot { color: #00a644; }
.tree .thin { font-weight: 400; }
.tree i { width: 1px; height: 100%; background: #272e2e; }
.tree i.g { background: #00a644; }
.l0 { padding-left: 12px; }
.l1 { padding-left: 45px; }
.l1p { padding-left: 29px; }
.l2, .l3 { padding-left: 51px; gap: 8px; }
.l3 i + i { margin: 0 0 0 9px; }
.l0s { padding-left: 29px; }
.l0t { padding-left: 42px; }
.tree .l0 svg + svg { margin-right: 7px; }
.tree .l0s svg { margin-right: 6px; }

/* desktop taskbar */
.taskbar { flex: none; height: 59px; display: grid; grid-template-columns: 1fr auto 1fr; background: #eee; border-top: 1px solid #c9c9c9; color: #1c1c1c; font-size: 15px; line-height: 21px; }
.weather { position: relative; justify-self: start; padding: 0 0 1px 20px; gap: 6px; text-align: left; }
.weather svg { width: 36px; height: 40px; }
.wtext small { display: block; font-size: 15px; color: #5b5b5b; }
.wbadge { position: absolute; left: 37px; top: 7px; width: 20px; height: 20px; border-radius: 10px; background: #c42b1c; color: #fff; font-size: 13px; line-height: 20px; text-align: center; }
.dock { display: flex; align-items: center; gap: 8px; }
.tile { position: relative; width: 47px; height: 48px; border-radius: 5px; }
.tile svg { width: 30px; height: 30px; }
.find { display: flex; align-items: center; width: 273px; height: 40px; padding: 0 4px 0 14px; border-radius: 20px; background: #fafafa; border: 1px solid #d4d4d4; }
.find svg { width: 18px; height: 18px; }
.find input { flex: 1; margin-left: 12px; padding: 0; background: none; font-size: 16px; }
.find input::placeholder { color: #5b5b5b; }
.find .frog { width: 62px; height: 30px; }
.run::after { content: ""; position: absolute; bottom: 0; width: 7px; height: 3px; border-radius: 2px; background: #858585; }
.active { background: #f9f9f9; border: 1px solid #e2e2e2; }
.active::after { width: 20px; background: #0a78d4; }
.tbadge { position: absolute; right: -1px; top: 3px; width: 23px; height: 21px; border-radius: 11px; background: #0a78d4; color: #fff; font-size: 13px; line-height: 21px; }
.tray { display: flex; align-items: center; justify-content: flex-end; gap: 10px; padding: 0 23px 1px 0; }
.tray svg { width: 20px; height: 18px; }
.tray .tray-up { width: 17px; height: 17px; margin-right: 13px; }
.tray time { margin-left: 12px; text-align: right; font-size: 15px; line-height: 21px; }
```
FILE: app.js
```
const NAMES = ["apps.plugin", "debugfs.plugin", "go.d.plugin", "netdata", "NETWORK-VIEWER", "sd-unit.plugin", "spawn-plugins", "tc-qos-helper"];
const COLORS = ["#66aa00", "#fe3912", "#3366cc", "#d66300", "#0099c6", "#dddd00", "#5054e6", "#f7941e"];
const W = 1470;
const H = 138;

// band: filled rectangle, line: horizontal stroke, both in plot coordinates
const band = (y1, y2, fill) => `<rect x="0" y="${y1}" width="${W}" height="${y2 - y1}" fill="${fill}"/>`;
const line = (y, color, w = 1.5) => `<path d="M0 ${y}H${W}" stroke="${color}" stroke-width="${w}"/>`;
const rough = (pts, base, fill, color) => {
  const d = pts.map((p) => p.join(" ")).join("L");
  return `<path d="M${d}V${base}H0Z" fill="${fill}"/><path d="M${d}" fill="none" stroke="${color}" stroke-width="1.500"/>`;
};

const CHARTS = [
  {
    title: "Applications Groups memory RSS usage • app.mem_usage • [mebibytes]", unit: "mebibytes", short: "MiB", mode: "area", tools: true,
    y: [96, 80, 64, 48, 32, 16, 0], pad: [1, 0], grid: [1, 23, 44, 65, 87], values: [6, 6, 89, 65, 8, 5, 16, 3],
    draw: band(11, 131, "#1c2740") + line(11.5, "#284a92") +
      rough([[0, 54.5], [18, 54.5], [50, 52.5], [80, 52], [230, 52], [285, 50.5], [460, 50.5], [580, 49], [813, 48.5], [823, 45], [850, 44.5], [1110, 44.5], [1180, 43], [1290, 42.5], [1470, 42.5]], 131, "#3a3235", "#81441b") +
      band(109, 131, "#3f3a5c") + line(109.5, "#47428a", 2) + band(118, 122, "#2b5c7e") + line(119, "#2d7296") +
      band(122, 124, "#8f9a20") + band(124, 128, "#8f7a38") + line(125, "#b59a2a") + band(128, 131, "#6a7556")
  },
  {
    title: "Applications Groups virtual memory size • app.vmem_usage • [gibibytes]", unit: "gibibytes", short: "GiB", mode: "lines", tools: true,
    y: [1, 1, 1, 1, 0, 0], pad: [13, 2], grid: [14, 37, 59, 81, 103], values: [0, 0, 1, 1, 0, 0, 0, 0],
    draw: line(11.5, "#2c55ac", 2) + line(64.5, "#c8610f") + line(114.5, "#0c7f9f") + line(117.5, "#5054c6", 2) + line(119.500, "#d8422a", 2) +
      line(123.500, "#bcbc10", 2) + line(126.500, "#b9791a", 2)
  },
  {
    title: "Applications Groups memory usage without shared • app.mem_private_usage • [mebibytes]", unit: "mebibytes", short: "MiB", mode: "area",
    y: [40, 32, 24, 16, 8, 0], pad: [0, 3], grid: [1, 26, 51, 76, 101], values: [1, 1, 30, 37, 2, 1, 12, 0],
    draw: rough([[0, 32.5], [20, 31], [45, 28], [80, 26.500], [230, 26.500], [260, 25], [400, 24], [560, 24], [580, 22.500], [650, 21.500], [813, 21], [823, 17], [850, 16], [1000, 16], [1100, 15.500], [1205, 14.500], [1215, 13], [1300, 12], [1380, 11], [1470, 11]], 128, "#3c2715", "#7d4010") +
      band(34, 128, "#3a3235") + line(34.500, "#35406c", 2) + band(90, 128, "#3f3a5c") + line(90.500, "#4b47b0") +
      band(122, 124, "#1f7e86") + band(124, 127, "#b08a2a") + line(127.500, "#8a8245")
  },
  { title: "", clipped: true }
];

const icon = (id, cls = "") => `<svg class="${cls}"><use href="#${id}"/></svg>`;
const chev = icon("chev", "chev");

function plot(c) {
  let g = `<path d="M.5 0V${H}M0 ${H - .5}H${W}" stroke="#222828"/>`;
  for (let i = 0; i < 15; i++) g += `<path d="M${(14.5 + i * 98.35).toFixed(1)} 0V${H}" stroke="#fff" stroke-opacity=".06"/>`;
  for (const y of c.grid) g += `<path d="M0 ${y + .5}H${W}" stroke="#fff" stroke-opacity=".04"/>`;
  return `<svg class="data" viewBox="0 0 ${W} ${H}" preserveAspectRatio="none">${c.draw}${g}</svg>`;
}

function card(c) {
  if (c.clipped) return `<section class="card"><header></header></section>`;
  const times = Array.from({ length: 15 }, (_, i) => {
    const m = 957 + i;
    return `<span>${Math.floor(m / 60)}:${String(m % 60).padStart(2, "0")}:00</span>`;
  }).join("");
  const items = NAMES.map((n, i) => `<div class="item"><i style="background:${COLORS[i]}"></i><div><span>${n}</span><strong>${c.values[i]}</strong><small>${c.short}</small></div></div>`).join("");
  const tools = c.tools ? `<div class="ptools"><button class="grab" aria-label="Pan">${icon("hand")}</button>${icon("select")}${icon("pan")}${icon("thinchev", "chev")}${icon("zin")}${icon("zout")}${icon("zreset")}</div>` : "";
  return `<section class="card">
    <header>${icon("logo", "mark")}<h3>${c.title}</h3><div class="tools">${["bell", "sliders", "info", c.mode, "full", "down", "save", "grip"].map((n) => icon(n)).join("")}</div></header>
    <div class="query"><svg class="collapse" viewBox="0 0 7 9" height="9"><path d="M.5 1L4 4.500.5 8M6.500 0v9" class="ln"/></svg>
      <button>Group by <b>app_group</b>${chev}</button><button>the <b>SUM()</b>${chev}</button><button><b>1</b> node${chev}</button>
      <button><b>8</b> instances${chev}</button><button><b>1</b> dimension${chev}</button><button><b>10</b> labels${chev}</button>
      <button>each as <b>AVG()</b> every 2s${chev}</button><button class="reset">Reset</button></div>
    <div class="plotrow"><div class="unit">${c.unit}</div><div class="yaxis" style="padding-top:${c.pad[0]}px;padding-bottom:${c.pad[1]}px">${c.y.map((v) => `<span>${v}</span>`).join("")}</div>
      <div class="plot">${plot(c)}${icon("ai", "ai")}${tools}</div></div>
    <div class="xaxis">${times}</div>
    <div class="legend">${icon("arrow", "down")}${items}<span class="latest">Latest:  Thu, Aug 14, 2025 • 16:11:50</span>${icon("resize", "grip")}</div>
  </section>`;
}

document.getElementById("charts").innerHTML = CHARTS.map(card).join("");
```
